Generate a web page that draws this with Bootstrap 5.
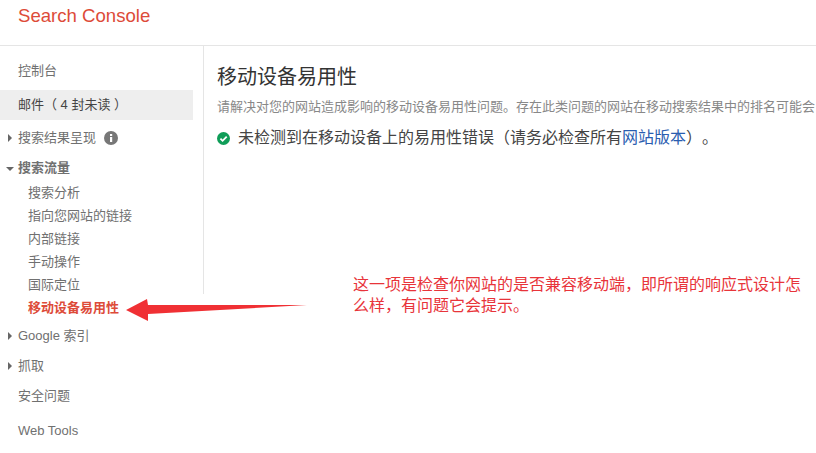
<!DOCTYPE html>
<html lang="zh-CN">
<head>
    <meta charset="UTF-8">
    <title>Search Console</title>
    <link href="https://cdn.jsdelivr.net/npm/bootstrap@5.3.0/dist/css/bootstrap.min.css" rel="stylesheet">
    <style>
        html, body { height: 100%; overflow: hidden; }
        body {
            font-family: "Liberation Sans", "Noto Sans CJK SC", sans-serif;
            font-size: 13px;
            color: #707070;
            background: #fff;
            position: relative;
        }
        .top-bar {
            height: 46px;
            padding: 4px 0 0 18px;
            border-bottom: 1px solid #e5e5e5;
        }
        .brand-name { font-size: 18.6px; line-height: 24px; color: #dd4b39; }
        .side-nav { width: 203px; flex-shrink: 0; padding-top: 10px; }
        .side-link {
            height: 30px;
            padding: 0 0 0 18px;
            color: #707070;
            font-size: 13px;
            position: relative;
        }
        .side-link.current { background: #eee; color: #444; width: 193px; margin-top: 4px; margin-bottom: 3px; }
        .side-link.group-open { height: 28px; padding-top: 2px; font-weight: 700; }
        .side-link.tools-link { margin-top: 5px; }
        .side-sub { height: 23px; padding: 0 0 0 28px; color: #707070; font-size: 13px; }
        .side-sub.current-sub { color: #dd4b39; font-weight: 700; }
        .side-subs { margin-bottom: 2px; }
        .caret-right {
            width: 0; height: 0;
            border-left: 4px solid #666;
            border-top: 4px solid transparent;
            border-bottom: 4px solid transparent;
            position: absolute; left: 8px; top: 11px;
        }
        .caret-down {
            width: 0; height: 0;
            border-top: 4px solid #666;
            border-left: 4px solid transparent;
            border-right: 4px solid transparent;
            position: absolute; left: 6px; top: 14px;
        }
        .info-mark { margin-left: 8px; }
        .main-pane {
            height: 248px;
            flex-grow: 1;
            min-width: 0;
            border-left: 1px solid #e5e5e5;
            padding: 17px 0 0 13px;
            overflow: hidden;
        }
        .page-title { font-size: 20px; line-height: 28px; font-weight: 400; color: #333; margin: 0 0 8px; }
        .page-desc { font-size: 13px; line-height: 16px; color: #888; margin: 0 0 13px; white-space: nowrap; }
        .status-line { font-size: 16px; line-height: 20px; color: #444; gap: 8px; white-space: nowrap; text-spacing-trim: space-all; }
        .status-line a { color: #2a5db0; text-decoration: none; }
        .note-text {
            position: absolute;
            left: 353px; top: 274px;
            width: 456px;
            font-size: 16px;
            line-height: 21px;
            color: #e8343a;
            margin: 0;
        }
        .note-arrow { position: absolute; left: 120px; top: 295px; }
    </style>
</head>
<body>
    <header class="top-bar">
        <div class="brand-name">Search Console</div>
    </header>
    <div class="d-flex">
        <nav class="side-nav nav flex-column">
            <a class="side-link nav-link d-flex align-items-center" href="#">控制台</a>
            <a class="side-link nav-link current d-flex align-items-center" href="#">邮件（ 4 封未读 ）</a>
            <a class="side-link nav-link d-flex align-items-center" href="#"><span class="caret-right"></span>搜索结果呈现
                <svg class="info-mark" width="14" height="14" viewBox="0 0 14 14"><circle cx="7" cy="7" r="7" fill="#777"/><rect x="6" y="6" width="2.2" height="5" fill="#fff"/><rect x="6" y="3" width="2.2" height="2" fill="#fff"/></svg>
            </a>
            <a class="side-link nav-link group-open d-flex align-items-center" href="#"><span class="caret-down"></span>搜索流量</a>
            <div class="side-subs d-flex flex-column">
                <a class="side-sub nav-link d-flex align-items-center" href="#">搜索分析</a>
                <a class="side-sub nav-link d-flex align-items-center" href="#">指向您网站的链接</a>
                <a class="side-sub nav-link d-flex align-items-center" href="#">内部链接</a>
                <a class="side-sub nav-link d-flex align-items-center" href="#">手动操作</a>
                <a class="side-sub nav-link d-flex align-items-center" href="#">国际定位</a>
                <a class="side-sub current-sub nav-link d-flex align-items-center" href="#">移动设备易用性</a>
            </div>
            <a class="side-link nav-link d-flex align-items-center" href="#"><span class="caret-right"></span>Google 索引</a>
            <a class="side-link nav-link d-flex align-items-center" href="#"><span class="caret-right"></span>抓取</a>
            <a class="side-link nav-link d-flex align-items-center" href="#">安全问题</a>
            <a class="side-link tools-link nav-link d-flex align-items-center" href="#">Web Tools</a>
        </nav>
        <main class="main-pane">
            <h1 class="page-title">移动设备易用性</h1>
            <p class="page-desc">请解决对您的网站造成影响的移动设备易用性问题。存在此类问题的网站在移动搜索结果中的排名可能会</p>
            <div class="status-line d-flex align-items-center">
                <svg width="13" height="13" viewBox="0 0 13 13"><circle cx="6.5" cy="6.5" r="6.5" fill="#0f9d58"/><path d="M3.4 6.6 5.6 8.8 9.7 4.6" fill="none" stroke="#fff" stroke-width="1.8"/></svg>
                <span>未检测到在移动设备上的易用性错误（请务必检查所有<a href="#">网站版本</a>）。</span>
            </div>
        </main>
    </div>
    <p class="note-text">这一项是检查你网站的是否兼容移动端，即所谓的响应式设计怎么样，有问题它会提示。</p>
    <svg class="note-arrow" width="190" height="30" viewBox="0 0 190 30"><path d="M6 15 27 4 28 10 187 10 28 19 28 26Z" fill="#f03034"/></svg>
    <script src="https://cdn.jsdelivr.net/npm/bootstrap@5.3.0/dist/js/bootstrap.bundle.min.js"></script>
</body>
</html>
